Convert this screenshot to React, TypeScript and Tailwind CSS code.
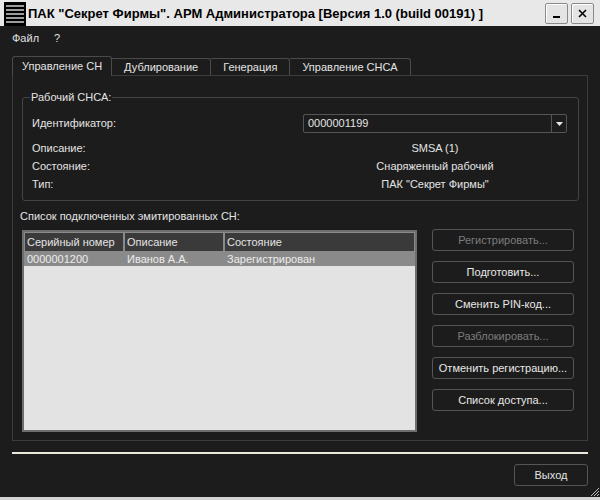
import React from 'react';

const tabs = ['Управление СН', 'Дублирование', 'Генерация', 'Управление СНСА'];

const actions = [
  { label: 'Регистрировать...', disabled: true },
  { label: 'Подготовить...', disabled: false },
  { label: 'Сменить PIN-код...', disabled: false },
  { label: 'Разблокировать...', disabled: true },
  { label: 'Отменить регистрацию...', disabled: false },
  { label: 'Список доступа...', disabled: false },
];

const info = [
  { label: 'Описание:', value: 'SMSA (1)' },
  { label: 'Состояние:', value: 'Снаряженный рабочий' },
  { label: 'Тип:', value: 'ПАК "Секрет Фирмы"' },
];

const TitleButton = ({ children }: { children: React.ReactNode }) => (
  <div className="w-[23px] h-[21px] bg-[#e4e4e4] border border-[#8a8a8a] rounded-[2px] shadow-[inset_1px_1px_0_#ffffff] flex items-center justify-center">
    {children}
  </div>
);

const App: React.FC = () => {
  return (
    <div className="relative w-[600px] h-[500px] bg-[#1c1c1c] flex flex-col overflow-hidden text-[11px] text-[#e4e4e4] font-['Liberation_Sans',sans-serif] border-b-[3px] border-[#d4d4d4]">
      {/* title bar */}
      <div className="h-[26px] shrink-0 bg-[#e8e8e8] flex items-end">
        <div className="ml-[4px] w-[22px] h-[24px] bg-black flex flex-col justify-center gap-[2px] px-[2px]">
          {[0, 1, 2, 3, 4].map((i) => (
            <div key={i} className="h-[2px] bg-[#9c9c9c]" />
          ))}
        </div>
        <div className="self-center ml-[2px] text-[13px] font-bold text-black leading-none whitespace-nowrap">
          ПАК "Секрет Фирмы". АРМ Администратора [Версия 1.0 (build 00191) ]
        </div>
        <div className="self-center ml-auto mr-[6px] flex gap-[3px]">
          <TitleButton>
            <div className="w-[7px] h-[2px] bg-black mt-[7px]" />
          </TitleButton>
          <TitleButton>
            <svg width="9" height="9" viewBox="0 0 9 9">
              <path d="M1 1 L8 8 M8 1 L1 8" stroke="#000" strokeWidth="1.6" />
            </svg>
          </TitleButton>
        </div>
      </div>

      {/* menu */}
      <div className="h-[24px] shrink-0 flex items-center gap-[15px] px-[12px] text-[#e0e0e0]">
        <span>Файл</span>
        <span>?</span>
      </div>

      {/* tabs */}
      <div className="mt-[6px] mx-[12px] flex items-end whitespace-nowrap">
        {tabs.map((t, i) =>
          i === 0 ? (
            <div
              key={t}
              className="relative z-10 -mb-px h-[20px] px-[9px] flex items-center border border-b-0 border-[#4a4a4a] rounded-t-[3px] bg-[#1c1c1c]"
            >
              {t}
            </div>
          ) : (
            <div
              key={t}
              className="h-[17px] px-[12px] flex items-center border border-l-0 border-b-0 border-[#4a4a4a] rounded-tr-[3px]"
            >
              {t}
            </div>
          )
        )}
      </div>

      {/* tab panel */}
      <div className="mx-[12px] h-[366px] border border-[#3c3c3c] px-[9px] flex flex-col">
        <fieldset className="mt-[14px] border border-[#444] rounded-[3px] pl-[9px] pr-[11px] pb-[7px]">
          <legend className="ml-[-2px] px-[1px] leading-[14px]">Рабочий СНСА:</legend>
          <div className="mt-[10px] flex items-center">
            <div className="w-[271px]">Идентификатор:</div>
            <div className="w-[264px] h-[19px] border border-[#555] rounded-[2px] flex items-center">
              <div className="flex-1 pl-[4px]">0000001199</div>
              <div className="w-[15px] h-full border-l border-[#555] flex items-center justify-center">
                <svg width="7" height="4" viewBox="0 0 7 4">
                  <path d="M0 0 H7 L3.5 4 Z" fill="#e8e8e8" />
                </svg>
              </div>
            </div>
          </div>
          <div className="mt-[6px] flex flex-col">
            {info.map((r) => (
              <div key={r.label} className="h-[18px] flex items-center">
                <div className="w-[271px]">{r.label}</div>
                <div className="w-[264px] text-center">{r.value}</div>
              </div>
            ))}
          </div>
        </fieldset>

        <div className="mt-[7px] h-[16px] -ml-[2px] flex items-center">Список подключенных эмитированных СН:</div>

        <div className="mt-[6px] flex gap-[15px]">
          <div className="w-[395px] h-[202px] border-2 border-[#6e6e6e] bg-[#e3e3e3] flex flex-col whitespace-nowrap">
            <div className="h-[20px] flex bg-[#3a3a3a] border border-[#8a8a8a] text-[#e4e4e4]">
              <div className="w-[100px] px-[2px] flex items-center border-r-2 border-[#8a8a8a]">Серийный номер</div>
              <div className="w-[100px] px-[2px] flex items-center border-r-2 border-[#8a8a8a]">Описание</div>
              <div className="flex-1 px-[2px] flex items-center">Состояние</div>
            </div>
            <div className="h-[14px] flex bg-[#8a8a8a] text-[#ececec]">
              <div className="w-[100px] px-[3px] flex items-center">0000001200</div>
              <div className="w-[100px] px-[3px] flex items-center">Иванов А.А.</div>
              <div className="flex-1 px-[3px] flex items-center">Зарегистрирован</div>
            </div>
          </div>

          <div className="w-[142px] -mt-px flex flex-col gap-[10px]">
            {actions.map((a) => (
              <div
                key={a.label}
                className={`h-[22px] border border-[#555] rounded-[3px] flex items-center justify-center whitespace-nowrap ${
                  a.disabled ? 'text-[#7c7c7c]' : 'text-[#e8e8e8]'
                }`}
              >
                {a.label}
              </div>
            ))}
          </div>
        </div>
      </div>

      {/* separator */}
      <div className="mt-[11px] mx-[12px] h-[2px] bg-[#ebe7dc]" />

      {/* footer */}
      <div className="mt-[10px] mr-[12px] flex justify-end">
        <div className="w-[74px] h-[22px] border border-[#555] rounded-[3px] flex items-center justify-center">Выход</div>
      </div>

      {/* resize grip */}
      <svg className="absolute right-0 bottom-0" width="12" height="12" viewBox="0 0 12 12">
        <path d="M11 3 L3 11 M11 6 L6 11 M11 9 L9 11" stroke="#bdbdbd" strokeWidth="1" />
      </svg>
    </div>
  );
};

export default App;
